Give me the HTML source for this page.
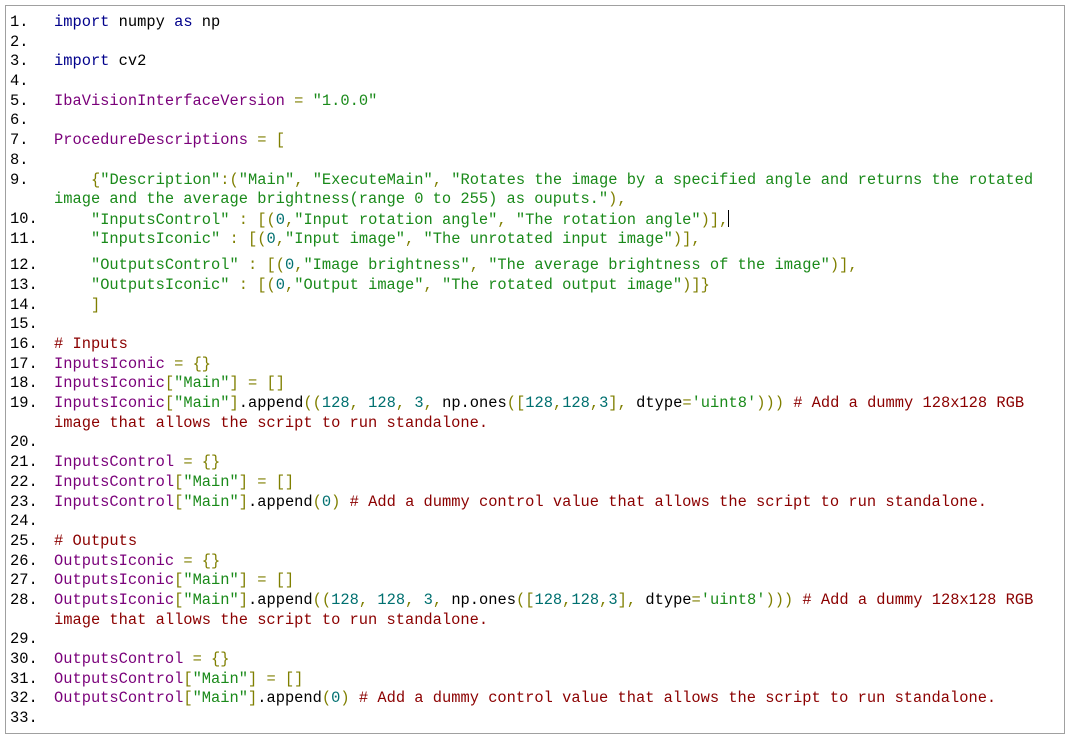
<!DOCTYPE html>
<html><head><meta charset="utf-8"><style>
body{margin:0;background:#fff;width:1069px;height:738px;overflow:hidden;position:relative}
.box{position:absolute;left:5px;top:5px;width:1058px;height:727px;border:1px solid #a0a0a0}
.c{position:absolute;left:0;top:13px;font-family:"Liberation Mono",monospace;font-size:15.4px;line-height:19.7px;color:#000}
.l{position:relative;padding-left:54px;white-space:pre;height:19.7px}
.l.w{height:39.4px}
.n{position:absolute;left:10px;color:#000}
.k{color:#00008b}.v{color:#7a007a}.s{color:#1a8a1a}.b{color:#7f7f00}.d{color:#007070}.m{color:#8b0000}
.gap{height:7px}
.cur{display:inline-block;width:1px;height:17px;background:#000;vertical-align:-3px}
</style></head><body>
<div class="box"></div>
<div class="c">
<div class="l"><span class="n">1.</span><span class="k">import</span> numpy <span class="k">as</span> np</div>
<div class="l"><span class="n">2.</span></div>
<div class="l"><span class="n">3.</span><span class="k">import</span> cv2</div>
<div class="l"><span class="n">4.</span></div>
<div class="l"><span class="n">5.</span><span class="v">IbaVisionInterfaceVersion</span> <span class="b">=</span> <span class="s">"1.0.0"</span></div>
<div class="l"><span class="n">6.</span></div>
<div class="l"><span class="n">7.</span><span class="v">ProcedureDescriptions</span> <span class="b">= [</span></div>
<div class="l"><span class="n">8.</span></div>
<div class="l w"><span class="n">9.</span>    <span class="b">{</span><span class="s">"Description"</span><span class="b">:(</span><span class="s">"Main"</span><span class="b">,</span> <span class="s">"ExecuteMain"</span><span class="b">,</span> <span class="s">"Rotates the image by a specified angle and returns the rotated</span>
<span class="s">image and the average brightness(range 0 to 255) as ouputs."</span><span class="b">),</span></div>
<div class="l"><span class="n">10.</span>    <span class="s">"InputsControl"</span> <span class="b">: [(</span><span class="d">0</span><span class="b">,</span><span class="s">"Input rotation angle"</span><span class="b">,</span> <span class="s">"The rotation angle"</span><span class="b">)],</span><span class="cur"></span></div>
<div class="l"><span class="n">11.</span>    <span class="s">"InputsIconic"</span> <span class="b">: [(</span><span class="d">0</span><span class="b">,</span><span class="s">"Input image"</span><span class="b">,</span> <span class="s">"The unrotated input image"</span><span class="b">)],</span></div>
<div class="gap"></div>
<div class="l"><span class="n">12.</span>    <span class="s">"OutputsControl"</span> <span class="b">: [(</span><span class="d">0</span><span class="b">,</span><span class="s">"Image brightness"</span><span class="b">,</span> <span class="s">"The average brightness of the image"</span><span class="b">)],</span></div>
<div class="l"><span class="n">13.</span>    <span class="s">"OutputsIconic"</span> <span class="b">: [(</span><span class="d">0</span><span class="b">,</span><span class="s">"Output image"</span><span class="b">,</span> <span class="s">"The rotated output image"</span><span class="b">)]}</span></div>
<div class="l"><span class="n">14.</span>    <span class="b">]</span></div>
<div class="l"><span class="n">15.</span></div>
<div class="l"><span class="n">16.</span><span class="m"># Inputs</span></div>
<div class="l"><span class="n">17.</span><span class="v">InputsIconic</span> <span class="b">= {}</span></div>
<div class="l"><span class="n">18.</span><span class="v">InputsIconic</span><span class="b">[</span><span class="s">"Main"</span><span class="b">] = []</span></div>
<div class="l w"><span class="n">19.</span><span class="v">InputsIconic</span><span class="b">[</span><span class="s">"Main"</span><span class="b">]</span>.append<span class="b">((</span><span class="d">128</span><span class="b">,</span> <span class="d">128</span><span class="b">,</span> <span class="d">3</span><span class="b">,</span> np.ones<span class="b">([</span><span class="d">128</span><span class="b">,</span><span class="d">128</span><span class="b">,</span><span class="d">3</span><span class="b">],</span> dtype<span class="b">=</span><span class="s">'uint8'</span><span class="b">)))</span> <span class="m"># Add a dummy 128x128 RGB</span>
<span class="m">image that allows the script to run standalone.</span></div>
<div class="l"><span class="n">20.</span></div>
<div class="l"><span class="n">21.</span><span class="v">InputsControl</span> <span class="b">= {}</span></div>
<div class="l"><span class="n">22.</span><span class="v">InputsControl</span><span class="b">[</span><span class="s">"Main"</span><span class="b">] = []</span></div>
<div class="l"><span class="n">23.</span><span class="v">InputsControl</span><span class="b">[</span><span class="s">"Main"</span><span class="b">]</span>.append<span class="b">(</span><span class="d">0</span><span class="b">)</span> <span class="m"># Add a dummy control value that allows the script to run standalone.</span></div>
<div class="l"><span class="n">24.</span></div>
<div class="l"><span class="n">25.</span><span class="m"># Outputs</span></div>
<div class="l"><span class="n">26.</span><span class="v">OutputsIconic</span> <span class="b">= {}</span></div>
<div class="l"><span class="n">27.</span><span class="v">OutputsIconic</span><span class="b">[</span><span class="s">"Main"</span><span class="b">] = []</span></div>
<div class="l w"><span class="n">28.</span><span class="v">OutputsIconic</span><span class="b">[</span><span class="s">"Main"</span><span class="b">]</span>.append<span class="b">((</span><span class="d">128</span><span class="b">,</span> <span class="d">128</span><span class="b">,</span> <span class="d">3</span><span class="b">,</span> np.ones<span class="b">([</span><span class="d">128</span><span class="b">,</span><span class="d">128</span><span class="b">,</span><span class="d">3</span><span class="b">],</span> dtype<span class="b">=</span><span class="s">'uint8'</span><span class="b">)))</span> <span class="m"># Add a dummy 128x128 RGB</span>
<span class="m">image that allows the script to run standalone.</span></div>
<div class="l"><span class="n">29.</span></div>
<div class="l"><span class="n">30.</span><span class="v">OutputsControl</span> <span class="b">= {}</span></div>
<div class="l"><span class="n">31.</span><span class="v">OutputsControl</span><span class="b">[</span><span class="s">"Main"</span><span class="b">] = []</span></div>
<div class="l"><span class="n">32.</span><span class="v">OutputsControl</span><span class="b">[</span><span class="s">"Main"</span><span class="b">]</span>.append<span class="b">(</span><span class="d">0</span><span class="b">)</span> <span class="m"># Add a dummy control value that allows the script to run standalone.</span></div>
<div class="l"><span class="n">33.</span></div>
</div>
</body></html>
